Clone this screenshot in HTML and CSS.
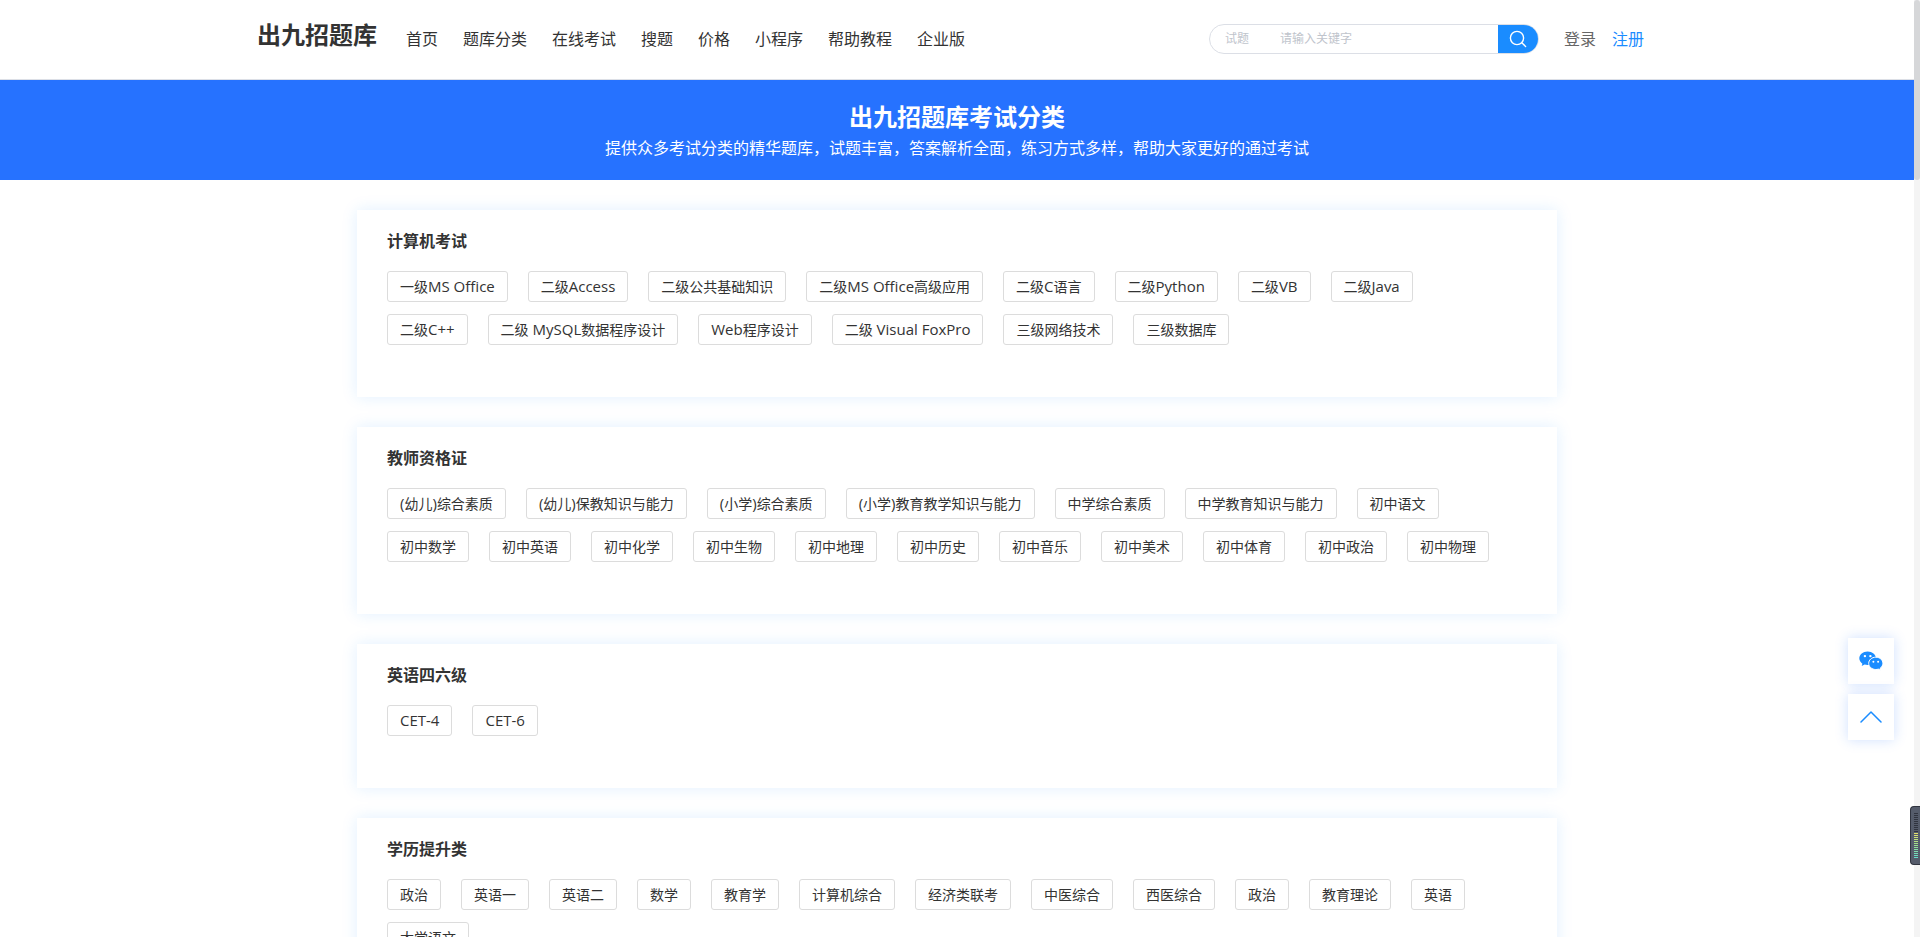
FILE: index.html
```html
<!DOCTYPE html>
<html lang="zh-CN">
<head>
<meta charset="utf-8">
<meta name="viewport" content="width=device-width, initial-scale=1">
<title>出九招题库考试分类</title>
<link rel="stylesheet" href="styles.css">
</head>
<body>
<div class="page">
  <header class="header">
    <div class="header-inner">
      <a class="logo" href="#">出九招题库</a>
      <nav class="nav">
        <a href="#">首页</a>
        <a href="#">题库分类</a>
        <a href="#">在线考试</a>
        <a href="#">搜题</a>
        <a href="#">价格</a>
        <a href="#">小程序</a>
        <a href="#">帮助教程</a>
        <a href="#">企业版</a>
      </nav>
      <form class="search">
        <select class="search-type" aria-label="搜索类型"><option>试题</option></select>
        <input class="search-input" type="text" placeholder="请输入关键字" aria-label="关键字">
        <button class="search-button" type="button" aria-label="搜索">
          <svg width="18" height="18" viewBox="0 0 18 18" fill="none" stroke="#fff" stroke-width="1.4" stroke-linecap="round"><circle cx="8" cy="8" r="6.6"/><path d="M12.8 12.8L16.6 16.4"/></svg>
        </button>
      </form>
      <div class="account">
        <a href="#">登录</a>
        <a class="register" href="#">注册</a>
      </div>
    </div>
  </header>

  <section class="banner">
    <h1>出九招题库考试分类</h1>
    <p>提供众多考试分类的精华题库，试题丰富，答案解析全面，练习方式多样，帮助大家更好的通过考试</p>
  </section>

  <main class="content">
    <section class="card">
      <h2>计算机考试</h2>
      <div class="tags">
        <a href="#">一级<span class="latin">MS Office</span></a>
        <a href="#">二级<span class="latin">Access</span></a>
        <a href="#">二级公共基础知识</a>
        <a href="#">二级<span class="latin">MS Office</span>高级应用</a>
        <a href="#">二级<span class="latin">C</span>语言</a>
        <a href="#">二级<span class="latin">Python</span></a>
        <a href="#">二级<span class="latin">VB</span></a>
        <a href="#">二级<span class="latin">Java</span></a>
        <a href="#">二级<span class="latin">C++</span></a>
        <a href="#">二级<span class="latin"> MySQL</span>数据程序设计</a>
        <a href="#"><span class="latin">Web</span>程序设计</a>
        <a href="#">二级<span class="latin"> Visual FoxPro</span></a>
        <a href="#">三级网络技术</a>
        <a href="#">三级数据库</a>
      </div>
    </section>
    <section class="card">
      <h2>教师资格证</h2>
      <div class="tags">
        <a href="#"><span class="latin">(</span>幼儿<span class="latin">)</span>综合素质</a>
        <a href="#"><span class="latin">(</span>幼儿<span class="latin">)</span>保教知识与能力</a>
        <a href="#"><span class="latin">(</span>小学<span class="latin">)</span>综合素质</a>
        <a href="#"><span class="latin">(</span>小学<span class="latin">)</span>教育教学知识与能力</a>
        <a href="#">中学综合素质</a>
        <a href="#">中学教育知识与能力</a>
        <a href="#">初中语文</a>
        <a href="#">初中数学</a>
        <a href="#">初中英语</a>
        <a href="#">初中化学</a>
        <a href="#">初中生物</a>
        <a href="#">初中地理</a>
        <a href="#">初中历史</a>
        <a href="#">初中音乐</a>
        <a href="#">初中美术</a>
        <a href="#">初中体育</a>
        <a href="#">初中政治</a>
        <a href="#">初中物理</a>
      </div>
    </section>
    <section class="card">
      <h2>英语四六级</h2>
      <div class="tags">
        <a href="#"><span class="latin">CET-4</span></a>
        <a href="#"><span class="latin">CET-6</span></a>
      </div>
    </section>
    <section class="card">
      <h2>学历提升类</h2>
      <div class="tags">
        <a href="#">政治</a>
        <a href="#">英语一</a>
        <a href="#">英语二</a>
        <a href="#">数学</a>
        <a href="#">教育学</a>
        <a href="#">计算机综合</a>
        <a href="#">经济类联考</a>
        <a href="#">中医综合</a>
        <a href="#">西医综合</a>
        <a href="#">政治</a>
        <a href="#">教育理论</a>
        <a href="#">英语</a>
        <a href="#">大学语文</a>
      </div>
    </section>
  </main>
</div>

<div class="scrollbar"><div class="scrollbar-thumb"></div></div>

<aside class="float-tools">
  <button type="button" aria-label="微信">
    <svg width="24" height="20" viewBox="0 0 24 20">
      <path fill="#1a8cff" d="M8.6 0.4C4 .4.3 3.5.3 7.300c0 2.200 1.200 4.100 3.100 5.400L2.700 15l2.900-1.400c1 .3 2 .5 3 .5 4.600 0 8.400-3 8.400-6.800S13.200.4 8.600.4z"/>
      <path fill="#1a8cff" stroke="#fff" stroke-width="1" d="M16.800 6.200c-4 0-7.100 2.700-7.100 6.100s3.100 6.200 7.100 6.200c.9 0 1.700-.1 2.500-.4l2.400 1.200-.6-2c1.700-1.200 2.800-2.900 2.800-5 0-3.400-3.100-6.100-7.100-6.100z"/>
      <g fill="#fff"><circle cx="5.900" cy="5.100" r="1.200"/><circle cx="11.400" cy="5.100" r="1.200"/><circle cx="14.400" cy="10.800" r="1"/><circle cx="19.100" cy="10.800" r="1"/></g>
    </svg>
  </button>
  <button type="button" aria-label="返回顶部">
    <svg width="22" height="12" viewBox="0 0 22 12" fill="none" stroke="#1a8cff" stroke-width="1.500" stroke-linecap="round" stroke-linejoin="round"><path d="M1 11L11 1L21 11"/></svg>
  </button>
</aside>

<div class="meter"><div class="meter-bars"></div></div>
</body>
</html>
```

FILE: styles.css
```css
* {
  box-sizing: border-box;
}

body {
  margin: 0;
  color: #333;
  background: #fff;
  font-family: "Open Sans", "Noto Sans CJK SC", sans-serif;
  font-size: 14px;
}

a {
  color: inherit;
  text-decoration: none;
}

h1, h2, p {
  margin: 0;
}

.page {
  height: 100vh;
  margin-right: 6px;
  overflow-y: auto;
  scrollbar-width: none;
}

.header {
  height: 80px;
  border-bottom: 1px solid #dcdfe6;
}

.header-inner {
  display: flex;
  align-items: center;
  max-width: 1400px;
  height: 100%;
  margin: 0 auto;
  padding: 0 13px 2px 0;
  font-size: 16px;
  line-height: 24px;
  white-space: nowrap;
}

.logo {
  padding-bottom: 8px;
  font-size: 24px;
  font-weight: 700;
  line-height: 32px;
}

.nav {
  display: flex;
  gap: 25px;
  margin-left: 29px;
}

.search {
  display: flex;
  width: 330px;
  height: 30px;
  margin-left: auto;
  overflow: hidden;
  border: 1px solid #dcdfe6;
  border-radius: 15px;
}

.search-type,
.search-input {
  min-width: 0;
  padding: 0;
  border: 0;
  outline: 0;
  appearance: none;
  background: transparent;
  color: #c0c4cc;
  font-family: inherit;
  font-size: 12px;
}

.search-type {
  width: 70px;
  padding-left: 15px;
}

.search-input {
  flex: 1;
}

.search-input::placeholder {
  color: #c0c4cc;
}

.search-button {
  display: flex;
  align-items: center;
  justify-content: center;
  width: 40px;
  padding: 0;
  border: 0;
  background: #1a8cff;
}

.account {
  display: flex;
  gap: 16px;
  margin-left: 25px;
  color: #666;
}

.account .register {
  color: #1a8cff;
}

.banner {
  height: 100px;
  padding-top: 20px;
  background: #2672ff;
  color: #fff;
  text-align: center;
}

.banner h1 {
  font-size: 24px;
  line-height: 34px;
}

.banner p {
  font-size: 16px;
  line-height: 28px;
}

.content {
  display: flex;
  flex-direction: column;
  gap: 30px;
  max-width: 1200px;
  margin: 30px auto;
}

.card {
  padding: 19px 60px 52px 30px;
  background: #fff;
  box-shadow: 0 0 15px rgba(26, 140, 255, 0.13);
}

.card h2 {
  margin-bottom: 18px;
  font-size: 16px;
  font-weight: 700;
  line-height: 24px;
}

.tags {
  display: flex;
  flex-wrap: wrap;
  gap: 12px 20px;
}

.tags a {
  height: 31px;
  padding: 0 12px;
  border: 1px solid #dcdcdc;
  border-radius: 3px;
  line-height: 29px;
  white-space: nowrap;
}

.latin {
  font-size: 15px;
}

.scrollbar {
  position: fixed;
  top: 0;
  right: 0;
  width: 6px;
  height: 100%;
  background: #f4f4f4;
}

.scrollbar-thumb {
  height: 180px;
  border-radius: 3px;
  background: #d6d7d9;
}

.float-tools {
  position: fixed;
  right: 26px;
  bottom: 197px;
  display: flex;
  flex-direction: column;
  gap: 10px;
}

.float-tools button {
  display: flex;
  align-items: center;
  justify-content: center;
  width: 46px;
  height: 46px;
  padding: 0;
  border: 0;
  background: #fff;
  box-shadow: 0 0 12px rgba(38, 114, 255, 0.22);
}

.meter {
  position: fixed;
  right: 0;
  bottom: 72px;
  width: 10px;
  height: 59px;
  padding: 6px 2px 6px 3px;
  border: 1px solid #30343f;
  border-right: 0;
  border-radius: 4px 0 0 4px;
  background: #555c6b;
}

.meter-bars {
  width: 4px;
  height: 45px;
  background:
    repeating-linear-gradient(transparent 0 1px, #555c6b 1px 2px),
    linear-gradient(#30343f 0 20px, #e8e36a 20px, #9be08e 32px, #62dccb);
}
```
